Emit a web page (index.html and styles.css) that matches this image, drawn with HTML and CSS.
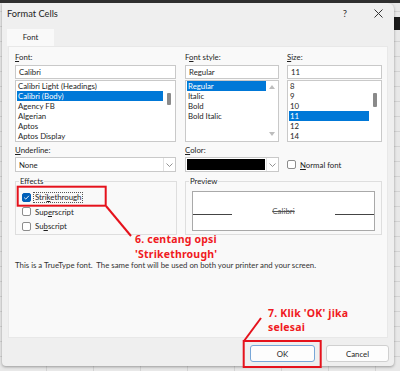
FILE: index.html
```html
<!DOCTYPE html>
<html lang="en">
<head>
    <meta charset="UTF-8">
    <meta name="viewport" content="width=device-width, initial-scale=1.0">
    <title>Format Cells</title>
    <link rel="stylesheet" href="styles.css">
</head>
<body>
    <div class="dialog">
        <div class="titlebar">
            <span class="title">Format Cells</span>
            <span class="help">?</span>
            <span class="close">
                <svg width="9" height="9" viewBox="0 0 9 9"><path d="M0.5 0.5 L8.5 8.5 M8.5 0.5 L0.5 8.5" stroke="#333" stroke-width="1"/></svg>
            </span>
        </div>
        <div class="tabs">
            <div class="tab">Font</div>
        </div>
        <div class="panel">
            <div class="fields">
                <div class="lbl"><u>F</u>ont:</div>
                <div class="lbl">F<u>o</u>nt style:</div>
                <div class="lbl"><u>S</u>ize:</div>

                <div class="combo first">
                    <div class="entry">Calibri</div>
                    <div class="list">
                        <ul class="items">
                            <li>Calibri Light (Headings)</li>
                            <li class="sel">Calibri (Body)</li>
                            <li>Agency FB</li>
                            <li>Algerian</li>
                            <li>Aptos</li>
                            <li>Aptos Display</li>
                        </ul>
                        <div class="scroll"><div class="thumb"></div></div>
                    </div>
                </div>
                <div class="combo">
                    <div class="entry">Regular</div>
                    <div class="list">
                        <ul class="items">
                            <li class="sel">Regular</li>
                            <li>Italic</li>
                            <li>Bold</li>
                            <li>Bold Italic</li>
                        </ul>
                        <div class="scroll arrows">
                            <svg width="6" height="4" viewBox="0 0 6 4"><path d="M0 4 L3 0 L6 4 Z" fill="#bdbdbd"/></svg>
                            <svg width="6" height="4" viewBox="0 0 6 4"><path d="M0 0 L3 4 L6 0 Z" fill="#bdbdbd"/></svg>
                        </div>
                    </div>
                </div>
                <div class="combo">
                    <div class="entry">11</div>
                    <div class="list">
                        <ul class="items">
                            <li>8</li>
                            <li>9</li>
                            <li>10</li>
                            <li class="sel">11</li>
                            <li>12</li>
                            <li>14</li>
                        </ul>
                        <div class="scroll"><div class="thumb tall"></div></div>
                    </div>
                </div>

                <div class="lbl second"><u>U</u>nderline:</div>
                <div class="lbl second"><u>C</u>olor:</div>
                <div></div>

                <div class="dropdown first">
                    <span class="value">None</span>
                    <span class="arrow"><svg width="7" height="4" viewBox="0 0 7 4"><path d="M0.5 0.5 L3.5 3.5 L6.5 0.5" fill="none" stroke="#777" stroke-width="0.8"/></svg></span>
                </div>
                <div class="dropdown">
                    <span class="swatch"></span>
                    <span class="arrow"><svg width="7" height="4" viewBox="0 0 7 4"><path d="M0.5 0.5 L3.5 3.5 L6.5 0.5" fill="none" stroke="#777" stroke-width="0.8"/></svg></span>
                </div>
                <div class="check normal">
                    <span class="box"></span>
                    <span><u>N</u>ormal font</span>
                </div>

                <fieldset class="group effects">
                    <legend>Effects</legend>
                    <div class="check">
                        <span class="box on">
                            <svg width="7" height="7" viewBox="0 0 7 7"><path d="M1.2 3.6 L2.8 5.1 L5.9 1.8" fill="none" stroke="#fff" stroke-width="0.9"/></svg>
                        </span>
                        <span class="focus">Stri<u>k</u>ethrough</span>
                    </div>
                    <div class="check">
                        <span class="box"></span>
                        <span>Sup<u>e</u>rscript</span>
                    </div>
                    <div class="check">
                        <span class="box"></span>
                        <span>Su<u>b</u>script</span>
                    </div>
                </fieldset>
                <fieldset class="group preview">
                    <legend>Preview</legend>
                    <div class="sample">
                        <span class="base"></span>
                        <span class="word">Calibri</span>
                        <span class="base"></span>
                    </div>
                </fieldset>
            </div>
            <p class="info">This is a TrueType font.&nbsp; The same font will be used on both your printer and your screen.</p>
        </div>
        <div class="buttons">
            <button class="btn ok">OK</button>
            <button class="btn">Cancel</button>
        </div>
    </div>

    <!-- tutorial annotations drawn on top of the screenshot -->
    <div class="annot">
        <svg width="400" height="371" viewBox="0 0 400 371">
            <rect x="17.7" y="186.7" width="88" height="19" fill="none" stroke="#e5121c" stroke-width="2"/>
            <line x1="106" y1="206" x2="131" y2="236" stroke="#e5121c" stroke-width="2"/>
            <rect x="243.7" y="341" width="77" height="26" fill="none" stroke="#e5121c" stroke-width="2"/>
            <line x1="244" y1="341" x2="261" y2="318" stroke="#e5121c" stroke-width="2"/>
        </svg>
        <div class="note note6">6. centang opsi<br>'Strikethrough'</div>
        <div class="note note7">7. Klik 'OK' jika<br>selesai</div>
    </div>
</body>
</html>
```

FILE: styles.css
```css
* {
    box-sizing: border-box;
}

body {
    margin: 0;
    height: 371px;
    padding-left: 2px;
    border-top: 3px solid #2f2f2f;
    font-family: 'Lato', 'Liberation Sans', sans-serif;
    font-size: 7.8px;
    color: #1e1e1e;
    background:
        linear-gradient(#1a1a1a, #1a1a1a) right 0 top 17px / 6px 13px no-repeat,
        repeating-linear-gradient(90deg, transparent 0 46px, #d3d3d3 46px 47px),
        repeating-linear-gradient(0deg, transparent 0 14px, #d3d3d3 14px 15px),
        #e8e8e8;
    overflow: hidden;
}

.dialog {
    width: 392px;
    height: 363px;
    display: flex;
    flex-direction: column;
    background-color: #efefef;
    border-radius: 0 6px 4px 4px;
    box-shadow: 0 1px 3px rgba(0, 0, 0, 0.35);
}

.titlebar {
    display: flex;
    align-items: center;
    height: 21px;
}

.title {
    flex: 1;
    padding-left: 5px;
    font-size: 9.3px;
}

.help {
    width: 34px;
    text-align: center;
    font-size: 9.5px;
    color: #333;
}

.close {
    width: 32px;
    display: flex;
    justify-content: center;
}

.tabs {
    display: flex;
    margin-top: 5px;
    padding-left: 5px;
}

.tab {
    width: 47px;
    height: 17px;
    line-height: 17px;
    text-align: center;
    background-color: #f9f9f9;
}

.panel {
    height: 292px;
    margin: 0 6px;
    padding: 5px 6px 0;
    background-color: #f9f9f9;
    border: 1px solid #e8e8e8;
}

.fields {
    display: grid;
    grid-template-columns: 162px 94px 95px;
    column-gap: 8px;
}

.lbl {
    line-height: 10px;
}

.lbl.second {
    margin-top: 3px;
}

.combo {
    margin-top: 3px;
}

.first > *,
.dropdown.first {
    width: 161px;
}

.entry {
    height: 14px;
    line-height: 12px;
    padding-left: 3px;
    background-color: #fff;
    border: 1px solid #c9c9c9;
}

.list {
    display: flex;
    height: 62px;
    margin-top: 1px;
    background-color: #fff;
    border: 1px solid #c9c9c9;
}

.items {
    flex: 1;
    margin: 0;
    padding: 0 0 0 1px;
    list-style: none;
}

.items li {
    height: 10px;
    line-height: 10px;
    padding-left: 1px;
    white-space: nowrap;
}

.items li.sel {
    background-color: #0078d7;
    color: #fff;
}

.scroll {
    width: 12px;
    display: flex;
    justify-content: center;
}

.thumb {
    width: 4px;
    height: 12px;
    margin-top: 12px;
    background-color: #8a8a8a;
    border-radius: 1px;
}

.thumb.tall {
    height: 14px;
}

.scroll.arrows {
    flex-direction: column;
    align-items: center;
    justify-content: space-between;
    padding: 4px 0 5px;
}

.dropdown {
    display: flex;
    align-items: center;
    height: 15px;
    margin-top: 2px;
    background-color: #fff;
    border: 1px solid #c9c9c9;
}

.dropdown .value {
    flex: 1;
    padding-left: 3px;
}

.swatch {
    flex: 1;
    align-self: stretch;
    margin: 1px;
    background-color: #000;
}

.arrow {
    width: 12px;
    align-self: stretch;
    display: flex;
    align-items: center;
    justify-content: center;
    border-left: 1px solid #e2e2e2;
}

.check {
    display: flex;
    align-items: center;
    height: 14.5px;
}

.check.normal {
    height: 15px;
    margin-top: 2px;
}

.box {
    width: 9px;
    height: 9px;
    margin-right: 4px;
    display: flex;
    align-items: center;
    justify-content: center;
    background-color: #fff;
    border: 1px solid #8c8c8c;
    border-radius: 2px;
}

.box.on {
    background-color: #005fb8;
    border-color: #005fb8;
}

.focus {
    margin-left: -1px;
    padding: 0 1px;
    line-height: 9px;
    outline: 1px dotted #555;
}

.group {
    height: 59px;
    margin: 4px 0 0;
    padding: 4px 6px 0;
    border: 1px solid #dedede;
    min-width: 0;
}

.group legend {
    margin-left: -3px;
    padding: 0 1px;
    line-height: 10px;
}

.preview {
    grid-column: 2 / 4;
    padding-top: 5px;
}

.sample {
    display: flex;
    align-items: center;
    height: 40px;
    background-color: #fff;
    border: 1px solid #a9a9a9;
}

.base {
    width: 39px;
    margin-top: 6px;
    border-top: 1px solid #444;
}

.word {
    flex: 1;
    text-align: center;
    font-size: 8px;
    color: #555;
    text-decoration: line-through;
}

.info {
    margin: 25px 0 0;
    line-height: 10px;
    color: #333;
}

.buttons {
    display: flex;
    justify-content: flex-end;
    gap: 11px;
    margin-top: 7px;
    padding-right: 5px;
}

.btn {
    height: 17px;
    width: 63px;
    padding: 0;
    font-family: inherit;
    font-size: 7.8px;
    color: #1e1e1e;
    background-color: #fdfdfd;
    border: 1px solid #d0d0d0;
    border-radius: 3px;
}

.btn.ok {
    width: 65px;
    border-color: #78a7d8;
}

.annot {
    position: absolute;
    left: 0;
    top: 0;
    width: 400px;
    height: 371px;
    pointer-events: none;
}

.annot svg {
    display: block;
}

.note {
    position: absolute;
    font-family: 'Noto Sans', 'Liberation Sans', sans-serif;
    font-size: 10.5px;
    font-weight: 700;
    letter-spacing: 0.2px;
    color: #f01a22;
    white-space: nowrap;
}

.note6 {
    left: 135px;
    top: 232px;
    line-height: 14.5px;
}

.note7 {
    left: 268px;
    top: 306px;
    line-height: 14px;
}
```
